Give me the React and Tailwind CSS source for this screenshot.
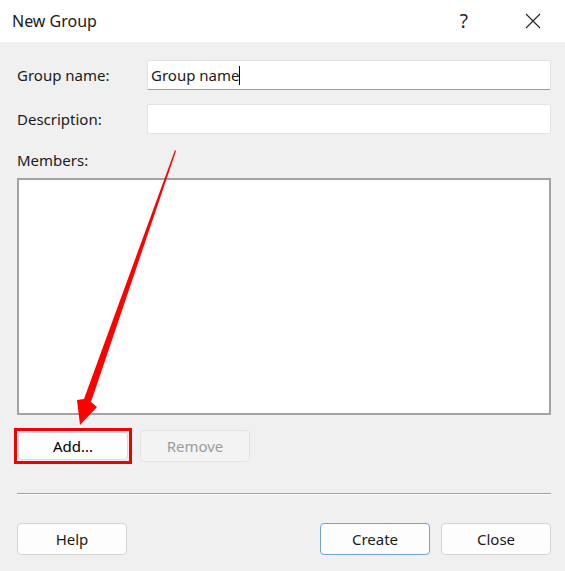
import React from 'react';

const font = { fontFamily: '"Noto Sans", "Liberation Sans", sans-serif' };

function Btn({ children, className = '' }) {
    return (
        <div className={`w-[110px] flex items-center justify-center rounded-[4px] border text-[15px] ${className}`}>
            {children}
        </div>
    );
}

export default function App() {
    return (
        <div className="relative w-[565px] h-[571px] bg-[#f0f0f0] overflow-hidden text-[#1a1a1a]" style={font}>
            {/* title bar */}
            <div className="h-[42px] bg-white flex items-center">
                <span className="pl-[12px] text-[16px] flex-1">New Group</span>
                <span className="text-[19px] text-[#222] mr-[57px]">?</span>
                <svg width="16" height="16" viewBox="0 0 16 16" className="mr-[24px]">
                    <path d="M1 1 L15 15 M15 1 L1 15" stroke="#222" strokeWidth="1.1" fill="none" />
                </svg>
            </div>

            <div className="pl-[17px] pr-[14px] pt-[18px] flex flex-col">
                <div className="flex items-center h-[30px]">
                    <span className="w-[130px] text-[15px]">Group name:</span>
                    <div className="flex-1 h-[30px] bg-white border border-[#e2e2e2] border-b-[#7f9fc7] rounded-[2px] flex items-center pl-[3px] text-[15px]">
                        Group name<span className="inline-block w-px h-[19px] bg-black"></span>
                    </div>
                </div>
                <div className="flex items-center h-[30px] mt-[14px]">
                    <span className="w-[130px] text-[15px]">Description:</span>
                    <div className="flex-1 h-[30px] bg-white border border-[#e2e2e2] rounded-[2px]"></div>
                </div>
                <div className="mt-[16px] text-[15px] leading-[20px]">Members:</div>
                <div className="mt-[8px] h-[237px] bg-white border-2 border-[#a3a3a3]"></div>

                <div className="flex items-center mt-[13px] ml-[-3px] gap-[8px]">
                    <div className="border-[3px] border-[#f00000] p-px">
                        <Btn className="h-[28px] bg-[#fdfdfd] border-[#d9d9d9] text-black">Add...</Btn>
                    </div>
                    <Btn className="h-[32px] bg-[#f3f3f3] border-[#e3e3e3] text-[#9c9c9c]">Remove</Btn>
                </div>

                <div className="mt-[29px] h-[2px] border-t border-[#a0a0a0] border-b border-b-white"></div>

                <div className="flex mt-[28px]">
                    <Btn className="h-[32px] bg-[#fdfdfd] border-[#d4d4d4]">Help</Btn>
                    <div className="flex-1"></div>
                    <Btn className="h-[32px] bg-[#fdfdfd] border-[#6fa3d8]">Create</Btn>
                    <Btn className="h-[32px] bg-[#fdfdfd] border-[#d4d4d4] ml-[11px]">Close</Btn>
                </div>
            </div>

            {/* annotation arrow */}
            <svg className="absolute left-0 top-0 pointer-events-none" width="565" height="571">
                <polygon
                    fill="#ff0000"
                    points="175,150 176,151 91,402 97,407 80,425 77,400 84,399"
                />
            </svg>
        </div>
    );
}
